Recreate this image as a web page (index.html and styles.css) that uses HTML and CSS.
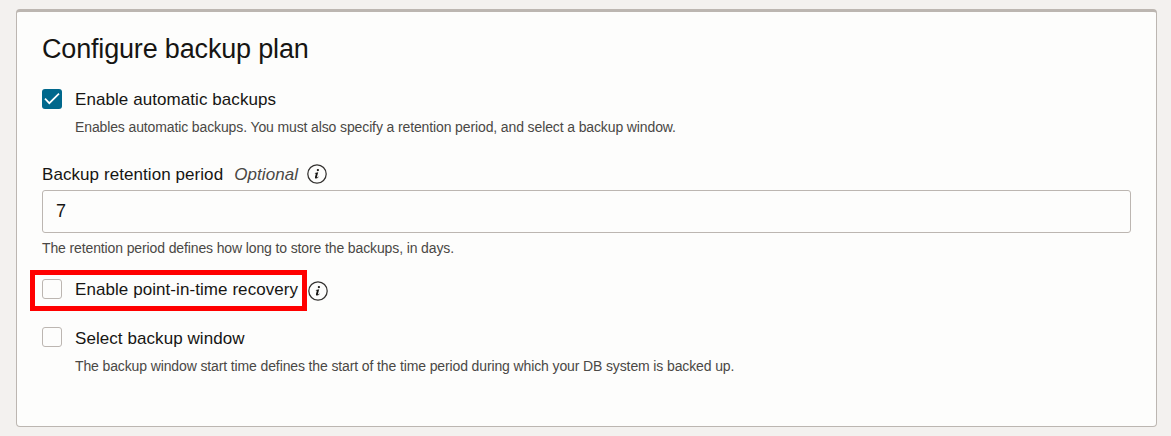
FILE: index.html
```
<!DOCTYPE html>
<html lang="en">
<head>
<meta charset="utf-8">
<title>Configure backup plan</title>
<link rel="stylesheet" href="styles.css">
</head>
<body>
<main class="panel">
  <h1 class="title">Configure backup plan</h1>
  <section class="option option-auto">
    <span class="box checked"><svg width="20" height="20" viewBox="0 0 20 20"><path d="M3 9.6 7.3 14.2 17 4.7" fill="none" stroke="#fff" stroke-width="1.7"/></svg></span>
    <div class="copy">
      <div class="label">Enable automatic backups</div>
      <div class="hint">Enables automatic backups. You must also specify a retention period, and select a backup window.</div>
    </div>
  </section>
  <section class="field">
    <div class="field-label"><span class="label">Backup retention period</span><em class="optional">Optional</em>
      <svg class="info" width="20" height="20" viewBox="0 0 20 20"><circle cx="10" cy="10" r="9.2" fill="none" stroke="#343230" stroke-width="1.25"/><circle cx="10.9" cy="6.1" r="1.15"/><path d="M7.9 9 11.2 8.2 9.9 13.1q-.1.6.3.3l1-.9.4.4q-1.5 1.8-2.8 1.7-1.2-.2-.8-1.7L8.9 9.6l-1 .1z"/></svg>
    </div>
    <div class="input">7</div>
    <div class="hint">The retention period defines how long to store the backups, in days.</div>
  </section>
  <section class="recovery">
    <div class="highlight"><span class="box"></span><span class="label">Enable point-in-time recovery</span></div>
    <svg class="info" width="20" height="20" viewBox="0 0 20 20"><circle cx="10" cy="10" r="9.2" fill="none" stroke="#343230" stroke-width="1.25"/><circle cx="10.9" cy="6.1" r="1.15"/><path d="M7.9 9 11.2 8.2 9.9 13.1q-.1.6.3.3l1-.9.4.4q-1.5 1.8-2.8 1.7-1.2-.2-.8-1.7L8.9 9.6l-1 .1z"/></svg>
  </section>
  <section class="option option-window">
    <span class="box"></span>
    <div class="copy">
      <div class="label">Select backup window</div>
      <div class="hint">The backup window start time defines the start of the time period during which your DB system is backed up.</div>
    </div>
  </section>
</main>
</body>
</html>
```
FILE: styles.css
```
* { box-sizing: border-box; }
body { margin: 0; padding: 9px 14px 9px 16px; height: 436px; overflow: hidden; background: #f3f1ef; color: #161513; font-family: "Liberation Sans", Arial, sans-serif; }
.panel { height: 418px; padding: 23px 25px 0; background: #fdfdfc; border: 1px solid #bcb6b1; border-top: 3px solid #bcb6b1; border-radius: 4px; }
.title { margin: 0; font-size: 27px; line-height: 28px; font-weight: 400; letter-spacing: -0.17px; }
.label { font-size: 17px; line-height: 20px; letter-spacing: 0.07px; white-space: nowrap; }
.hint { font-size: 14px; line-height: 16px; letter-spacing: -0.122px; color: #4a4845; white-space: nowrap; }
.box { display: block; flex: none; width: 20px; height: 20px; border: 1px solid #bcb6b1; border-radius: 3px; background: #fdfdfc; }
.checked { border: 0; background: #00688c; }
.checked svg { display: block; }
.option { display: flex; gap: 13px; }
.option-auto { margin-top: 26px; }
.copy { padding-top: 1px; }
.option .hint { margin-top: 9px; }
.field { margin-top: 28px; }
.field-label { display: flex; align-items: center; height: 22px; }
.field-label .label, .optional { padding-top: 2px; }
.optional { margin-left: 11px; font-size: 17px; line-height: 20px; letter-spacing: 0.07px; color: #4a4845; }
.field-label .info { margin-left: 9px; }
.info { display: block; flex: none; fill: #161513; }
.input { height: 43px; margin-top: 5px; padding: 0 13px; border: 1px solid #bcb6b1; border-radius: 3px; font-size: 18px; line-height: 41px; }
.field .hint { margin-top: 7px; }
.recovery { display: flex; align-items: center; margin: 14px 0 0 -12px; }
.highlight { display: flex; align-items: flex-start; gap: 13px; width: 277px; height: 41px; padding: 4px 0 0 7px; border: 5px solid #f00; }
.highlight .label { padding-top: 1px; }
.recovery .info { margin-left: 1px; }
.option-window { margin-top: 16px; }
.option-window .copy { padding-top: 2px; }
```
